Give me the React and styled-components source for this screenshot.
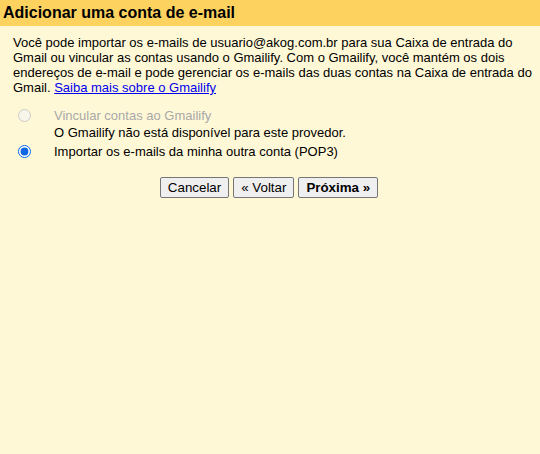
import React from "react";
import styled, { createGlobalStyle } from "styled-components";

const Global = createGlobalStyle`
  html, body { margin: 0; padding: 0; background: #fff8d7; }
  body { font-family: Arial, "Liberation Sans", sans-serif; color: #000; }
`;

const Page = styled.div`
  width: 540px;
  height: 454px;
  background: #fff8d7;
  display: flex;
  flex-direction: column;
`;

const Header = styled.h1`
  margin: 0;
  height: 26px;
  background: #fed25f;
  font-size: 16px;
  font-weight: bold;
  line-height: 26px;
  padding: 0 3px;
`;

const Body = styled.div`
  padding: 9px 2px 0 13px;
  font-size: 13px;
  line-height: 15px;
`;

const Intro = styled.p`
  margin: 0;
`;

const Link = styled.a`
  color: #0000ee;
  text-decoration: underline;
`;

const Options = styled.div`
  margin-top: 11px;
  display: flex;
  flex-direction: column;
`;

const OptionRow = styled.label`
  display: grid;
  grid-template-columns: 41px 1fr;
  align-items: center;
  min-height: 19px;
  color: ${(p) => (p.$disabled ? "#a8a8a8" : "#000")};
`;

const Radio = styled.input`
  margin: 0 0 0 5px;
  width: 13px;
  height: 13px;
  accent-color: #0b66e4;
`;

const Note = styled.div`
  padding-left: 41px;
  margin-bottom: 2px;
`;

const Buttons = styled.div`
  margin-top: 16px;
  display: flex;
  justify-content: center;
  gap: 4px;
  padding-right: 2px;
`;

const Button = styled.button`
  font-family: Arial, "Liberation Sans", sans-serif;
  font-size: 13.333px;
  font-weight: ${(p) => (p.$primary ? "bold" : "normal")};
  height: 21px;
  padding: 0 7px;
  background: #efefef;
  border: 1px solid #767676;
  border-radius: 2px;
  color: #000;
  line-height: 19px;
`;

export default function App() {
  return (
    <>
      <Global />
      <Page>
        <Header>Adicionar uma conta de e-mail</Header>
        <Body>
          <Intro>
            Você pode importar os e-mails de usuario@akog.com.br para sua Caixa de entrada do
            Gmail ou vincular as contas usando o Gmailify. Com o Gmailify, você mantém os dois
            endereços de e-mail e pode gerenciar os e-mails das duas contas na Caixa de entrada do
            Gmail. <Link href="#">Saiba mais sobre o Gmailify</Link>
          </Intro>
          <Options>
            <OptionRow $disabled>
              <Radio type="radio" name="opt" disabled />
              <span>Vincular contas ao Gmailify</span>
            </OptionRow>
            <Note>O Gmailify não está disponível para este provedor.</Note>
            <OptionRow>
              <Radio type="radio" name="opt" defaultChecked />
              <span>Importar os e-mails da minha outra conta (POP3)</span>
            </OptionRow>
          </Options>
        </Body>
        <Buttons>
          <Button>Cancelar</Button>
          <Button>« Voltar</Button>
          <Button $primary>Próxima »</Button>
        </Buttons>
      </Page>
    </>
  );
}
